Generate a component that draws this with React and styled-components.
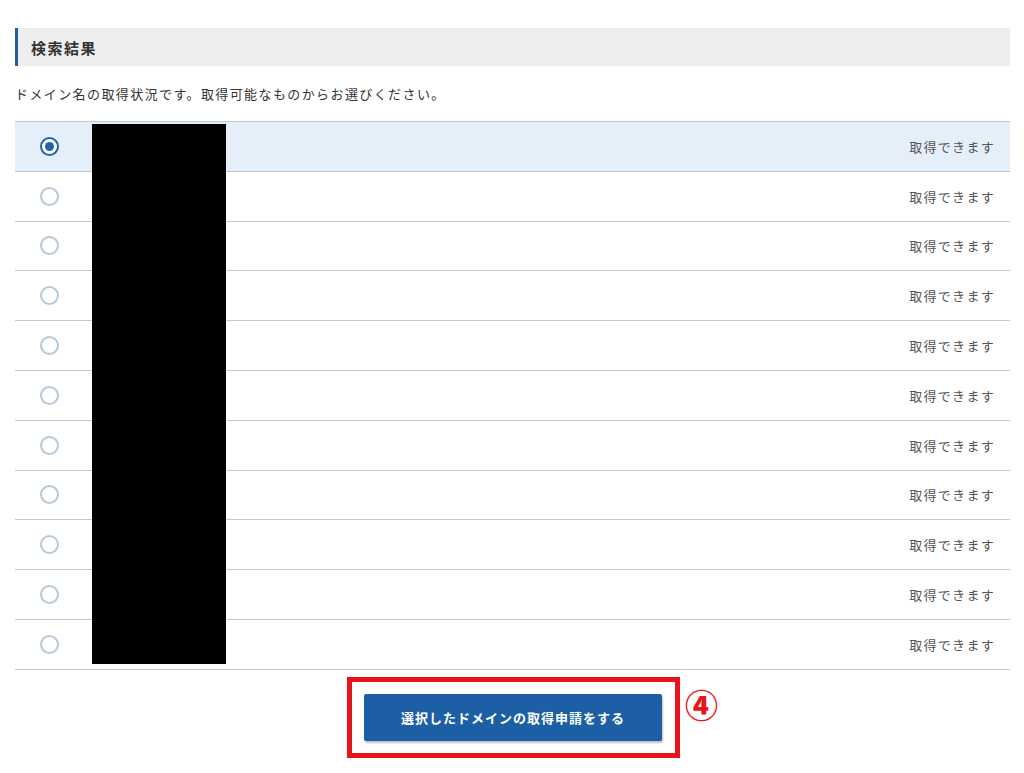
import React from 'react';
import styled, { createGlobalStyle } from 'styled-components';

const GlobalStyle = createGlobalStyle`
  body {
    margin: 0;
    background: #fff;
    font-family: "Noto Sans CJK JP", "Noto Sans", sans-serif;
    color: #333;
  }
`;

const Page = styled.div`
  width: 995px;
  padding: 28px 0 0 15px;
`;

const SectionTitle = styled.h2`
  margin: 0;
  height: 38px;
  display: flex;
  align-items: center;
  padding-left: 13px;
  background: #eeeeee;
  border-left: 3px solid #1d5ea5;
  font-size: 15px;
  font-weight: bold;
  letter-spacing: 1.5px;
  color: #333;
`;

const Lead = styled.p`
  margin: 18px 0 17px;
  font-size: 13px;
  line-height: 20px;
  letter-spacing: 1.4px;
  color: #333;
`;

const Table = styled.div`
  position: relative;
  border-top: 1px solid #b7cbdd;
`;

const Row = styled.label`
  box-sizing: border-box;
  height: 49.8px;
  display: flex;
  align-items: center;
  padding: 0 15px 0 25px;
  border-bottom: 1px solid #b7cbdd;
  background: ${({ selected }) => (selected ? '#e5eff9' : '#fff')};
  cursor: pointer;
`;

const Radio = styled.span`
  box-sizing: border-box;
  width: 19px;
  height: 19px;
  border-radius: 50%;
  border: 2px solid ${({ checked }) => (checked ? '#1f65ad' : '#b5c9dc')};
  background: #fff;
  display: flex;
  align-items: center;
  justify-content: center;
  &::after {
    content: '';
    width: 9px;
    height: 9px;
    border-radius: 50%;
    background: ${({ checked }) => (checked ? '#1f65ad' : 'transparent')};
  }
`;

const DomainName = styled.span`
  flex: 1;
  padding-left: 40px;
  font-size: 13px;
`;

const Status = styled.span`
  font-size: 13px;
  letter-spacing: 1.3px;
  color: #555;
`;

const Redaction = styled.div`
  position: absolute;
  left: 77px;
  top: 2px;
  width: 134px;
  height: 540px;
  background: #000;
`;

const Actions = styled.div`
  display: flex;
  justify-content: center;
  padding: 7px 0 0 2px;
`;

const Highlight = styled.div`
  position: relative;
  border: 5px solid #e8141d;
  padding: 12px 13px 12px 12px;
`;

const SubmitButton = styled.button`
  width: 298px;
  height: 47px;
  border: none;
  border-radius: 2px;
  background: #1c5fa4;
  box-shadow: 1px 2px 2px rgba(0, 0, 0, 0.25);
  color: #fff;
  font-family: "Noto Sans CJK JP", sans-serif;
  font-size: 13px;
  font-weight: bold;
  letter-spacing: 1px;
  cursor: pointer;
`;

const StepMark = styled.span`
  position: absolute;
  left: 333px;
  top: 6px;
  color: #e8141d;
  font-size: 33px;
  font-weight: 900;
  line-height: 1;
  font-family: "Noto Sans CJK JP", sans-serif;
`;

const rows = Array.from({ length: 11 }, (_, i) => ({ id: i, selected: i === 0 }));

const App = () => (
  <Page>
    <GlobalStyle />
    <SectionTitle>検索結果</SectionTitle>
    <Lead>ドメイン名の取得状況です。取得可能なものからお選びください。</Lead>
    <Table>
      {rows.map(r => (
        <Row key={r.id} selected={r.selected}>
          <Radio checked={r.selected} />
          <DomainName />
          <Status>取得できます</Status>
        </Row>
      ))}
      <Redaction />
    </Table>
    <Actions>
      <Highlight>
        <SubmitButton>選択したドメインの取得申請をする</SubmitButton>
        <StepMark>④</StepMark>
      </Highlight>
    </Actions>
  </Page>
);

export default App;
